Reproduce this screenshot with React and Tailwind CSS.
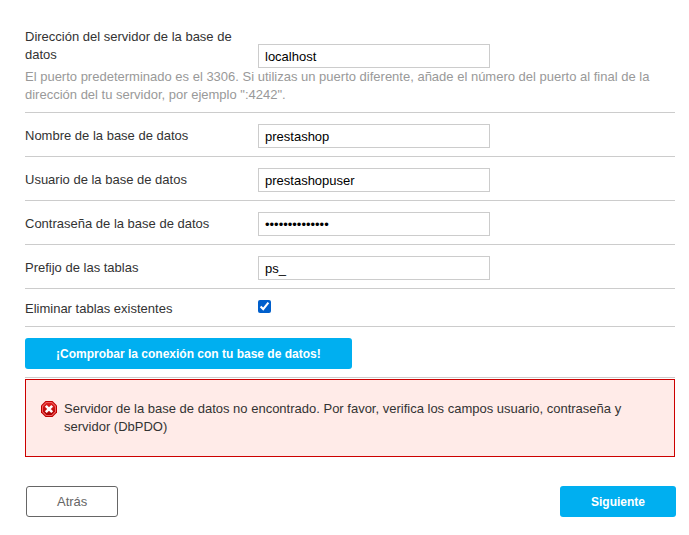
import { useState } from "react";

const FIELDS = [
  { id: "dbName", label: "Nombre de la base de datos", type: "text" },
  { id: "dbLogin", label: "Usuario de la base de datos", type: "text" },
  { id: "dbPassword", label: "Contraseña de la base de datos", type: "password" },
  { id: "dbPrefix", label: "Prefijo de las tablas", type: "text" },
];

const inputClass =
  "h-6 w-[232px] border border-[#cccccc] bg-white px-1.5 text-[13px] leading-[18px] text-black outline-none";

const primaryButtonClass =
  "block h-[31px] rounded-[3px] bg-[#00aff0] px-[31px] text-[12px] font-bold text-white";

function ErrorIcon() {
  return (
    <svg viewBox="0 0 16 16" className="mt-px h-4 w-4 shrink-0" aria-hidden="true">
      <defs>
        <linearGradient id="errorFill" x1="0" y1="0" x2="0" y2="1">
          <stop offset="0" stopColor="#e02020" />
          <stop offset="1" stopColor="#a80000" />
        </linearGradient>
      </defs>
      <path d="M4.5 0h7L16 4.5v7L11.5 16h-7L0 11.5v-7z" fill="#c00000" />
      <path d="M5 1h6l4 4v6l-4 4H5l-4-4V5z" fill="#f06060" />
      <path d="M5.4 2h5.2L14 5.4v5.2L10.6 14H5.4L2 10.6V5.4z" fill="url(#errorFill)" />
      <path d="M4.8 4.8l6.4 6.4M11.2 4.8l-6.4 6.4" stroke="#ffffff" strokeWidth="2.6" />
    </svg>
  );
}

export default function App() {
  const [values, setValues] = useState({
    dbServer: "localhost",
    dbName: "prestashop",
    dbLogin: "prestashopuser",
    dbPassword: "contrasena1234",
    dbPrefix: "ps_",
  });
  const [clear, setClear] = useState(true);

  const update = (e) => setValues({ ...values, [e.target.id]: e.target.value });

  return (
    <form
      className="bg-white pt-7 pb-[18px] font-['Liberation_Sans',Arial,sans-serif] text-[13px] leading-[18px] text-[#333333]"
      onSubmit={(e) => e.preventDefault()}
    >
      <div className="pr-3.5 pl-[25px]">
        <div className="border-b border-[#cccccc] pb-2">
          <div className="flex h-10">
            <label htmlFor="dbServer" className="w-[233px] shrink-0 pr-3">
              Dirección del servidor de la base de datos
            </label>
            <input
              id="dbServer"
              type="text"
              className={`${inputClass} self-end`}
              value={values.dbServer}
              onChange={update}
            />
          </div>
          <p className="text-[#999999]">
            El puerto predeterminado es el 3306. Si utilizas un puerto diferente, añade el número del
            puerto al final de la dirección del tu servidor, por ejemplo ":4242".
          </p>
        </div>

        {FIELDS.map((f) => (
          <div key={f.id} className="flex items-center border-b border-[#cccccc] pt-[11px] pb-2">
            <label htmlFor={f.id} className="w-[233px] shrink-0">
              {f.label}
            </label>
            <input
              id={f.id}
              type={f.type}
              className={inputClass}
              value={values[f.id]}
              onChange={update}
            />
          </div>
        ))}

        <div className="flex items-start border-b border-[#cccccc] pt-[11px] pb-2">
          <label htmlFor="dbClear" className="w-[233px] shrink-0">
            Eliminar tablas existentes
          </label>
          <input
            id="dbClear"
            type="checkbox"
            className="h-[13px] w-[13px] accent-[#005fcc]"
            checked={clear}
            onChange={(e) => setClear(e.target.checked)}
          />
        </div>

        <div className="border-b border-[#cccccc] pt-[11px] pb-2">
          <button type="button" className={primaryButtonClass}>
            ¡Comprobar la conexión con tu base de datos!
          </button>
        </div>

        {/* Connection test result */}
        <div
          role="alert"
          className="mt-px flex gap-[7px] border border-[#cc0000] bg-[#ffebe8] px-[15px] py-5"
        >
          <ErrorIcon />
          <p>
            Servidor de la base de datos no encontrado. Por favor, verifica los campos usuario,
            contraseña y servidor (DbPDO)
          </p>
        </div>
      </div>

      <div className="mt-[29px] flex justify-between pr-[13px] pl-[26px]">
        <button
          type="button"
          className="h-[31px] rounded-[3px] border border-[#666666] bg-white px-[30px] text-[#666666]"
        >
          Atrás
        </button>
        <button type="submit" className={primaryButtonClass}>
          Siguiente
        </button>
      </div>
    </form>
  );
}
